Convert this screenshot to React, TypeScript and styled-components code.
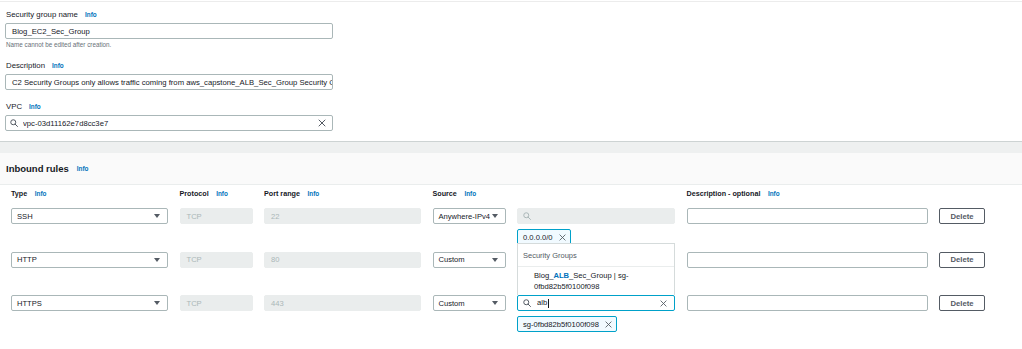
import React from 'react';
import styled, { createGlobalStyle } from 'styled-components';

const GlobalStyle = createGlobalStyle`
  html, body {
    margin: 0;
    padding: 0;
    background: #ffffff;
    overflow: hidden;
  }
  body {
    font-family: "Liberation Sans", Arial, sans-serif;
    color: #16191f;
  }
  * { box-sizing: border-box; }
`;

const COLUMNS = '157px 73px 157px 73px 158px 241px 46px';

const Page = styled.div`
  margin-top: 1px;
  border-top: 1px solid #ececec;
`;

const BasicSection = styled.section`
  display: flex;
  flex-direction: column;
  gap: 12px;
  padding: 8px 0 10px 5px;
`;

const Field = styled.div`
  display: flex;
  flex-direction: column;
`;

const Label = styled.div`
  display: flex;
  align-items: baseline;
  height: 9px;
  line-height: 9px;
  margin-bottom: 4px;
  padding-left: 1px;
  font-size: 7.8px;
`;

const Info = styled.span`
  margin-left: 7px;
  font-size: 6.4px;
  font-weight: 700;
  color: #0073bb;
`;

const TextBox = styled.div`
  display: flex;
  align-items: center;
  width: 328px;
  height: 16px;
  padding: 0 6px;
  border: 1px solid #aab7b8;
  border-radius: 2px;
  font-size: 7.7px;
  white-space: nowrap;
  overflow: hidden;
`;

const SearchBox = styled(TextBox)`
  padding: 0 6px 0 4px;
  gap: 5px;
`;

const Grow = styled.span`
  flex: 1;
  overflow: hidden;
`;

const Hint = styled.div`
  margin-top: 2px;
  height: 8px;
  line-height: 8px;
  padding-left: 1px;
  font-size: 6.3px;
  color: #687078;
`;

const Band = styled.div`
  height: 12px;
  border-top: 1px solid #cdd3d3;
  background: #eef0f0;
`;

const PanelHeader = styled.div`
  display: flex;
  align-items: center;
  height: 32px;
  padding-left: 6px;
  background: #fafafa;
  border-bottom: 1px solid #eaeded;
  font-size: 9.5px;
  font-weight: 700;
`;

const HeaderInfo = styled(Info)`
  margin-left: 8px;
`;

const RulesArea = styled.div`
  padding: 3px 0 0 11px;
`;

const ColumnHeads = styled.div`
  display: grid;
  grid-template-columns: ${COLUMNS};
  column-gap: 11.5px;
  height: 10px;
  margin-bottom: 10px;
`;

const ColumnHead = styled.div`
  display: flex;
  align-items: center;
  font-size: 7.2px;
  font-weight: 700;
  white-space: nowrap;
`;

const ColumnInfo = styled(Info)`
  margin-left: 7.5px;
`;

const RuleRow = styled.div`
  display: grid;
  grid-template-columns: ${COLUMNS};
  grid-template-rows: 16px auto;
  column-gap: 11.5px;
  row-gap: 5px;
  height: 43.5px;
  align-items: start;
`;

const Control = styled.div<{ $disabled?: boolean; $focused?: boolean }>`
  position: relative;
  display: flex;
  align-items: center;
  height: 16px;
  padding: 0 6px;
  border: 1px solid ${(p) => (p.$focused ? '#00a1c9' : p.$disabled ? '#eaeded' : '#aab7b8')};
  border-radius: 2px;
  background: ${(p) => (p.$disabled ? '#eaeded' : '#ffffff')};
  color: ${(p) => (p.$disabled ? '#aab7b8' : '#16191f')};
  font-size: 7.6px;
  white-space: nowrap;
`;

const SelectControl = styled(Control)`
  justify-content: space-between;
  padding: 0 7px 0 5px;
`;

const RuleSearch = styled(Control)`
  padding: 0 7px 0 5px;
  gap: 6px;
`;

const TokenCell = styled.div`
  grid-column: 5;
  grid-row: 2;
  display: flex;
`;

const Token = styled.div`
  display: flex;
  align-items: center;
  gap: 6px;
  height: 16px;
  padding: 0 4px 0 5px;
  border: 1px solid #00a1c9;
  border-radius: 2px;
  background: #f1faff;
  font-size: 7.6px;
`;

const TextCursor = styled.span`
  display: inline-block;
  width: 1px;
  height: 9px;
  margin-left: 1px;
  vertical-align: middle;
  background: #16191f;
`;

const Dropdown = styled.div`
  position: absolute;
  left: -1px;
  right: -1px;
  bottom: calc(100% + 1px);
  z-index: 2;
  background: #ffffff;
  border: 1px solid #d5dbdb;
  border-bottom: none;
  color: #16191f;
  white-space: normal;
`;

const GroupLabel = styled.div`
  display: flex;
  align-items: center;
  height: 23px;
  padding-left: 5px;
  border-bottom: 1px solid #eaeded;
  font-size: 7.5px;
  color: #545b64;
`;

const Option = styled.div`
  padding: 3px 8px 3px 16px;
  line-height: 11px;
  font-size: 7.6px;
`;

const Match = styled.b`
  color: #0073bb;
`;

const Button = styled.button`
  height: 16px;
  padding: 0;
  border: 1px solid #545b64;
  border-radius: 2px;
  background: #ffffff;
  color: #545b64;
  font-family: inherit;
  font-size: 7.7px;
  font-weight: 700;
`;

const Footer = styled.div`
  padding: 8.5px 0 0 5px;
`;

const AddButton = styled(Button)`
  width: 54px;
  border-color: #9aa0a4;
`;

const SearchIcon = ({ color = '#545b64' }: { color?: string }) => (
  <svg width="8" height="8" viewBox="0 0 16 16" fill="none" stroke={color} strokeWidth="2">
    <circle cx="6.5" cy="6.5" r="5" />
    <line x1="10.3" y1="10.3" x2="15" y2="15" strokeLinecap="round" />
  </svg>
);

const CloseIcon = ({ size = 8 }: { size?: number }) => (
  <svg width={size} height={size} viewBox="0 0 16 16" fill="none" stroke="#545b64" strokeWidth="2" strokeLinecap="round">
    <line x1="2" y1="2" x2="14" y2="14" />
    <line x1="14" y1="2" x2="2" y2="14" />
  </svg>
);

const Caret = () => (
  <svg width="6" height="4" viewBox="0 0 6 4">
    <polygon points="0,0 6,0 3,4" fill="#545b64" />
  </svg>
);

type Rule = {
  type: string;
  port: string;
  source: string;
  token?: string;
  focused?: boolean;
};

const rules: Rule[] = [
  { type: 'SSH', port: '22', source: 'Anywhere-IPv4', token: '0.0.0.0/0' },
  { type: 'HTTP', port: '80', source: 'Custom' },
  { type: 'HTTPS', port: '443', source: 'Custom', token: 'sg-0fbd82b5f0100f098', focused: true },
];

const heads = ['Type', 'Protocol', 'Port range', 'Source', '', 'Description - optional', ''];

const RuleLine = ({ rule }: { rule: Rule }) => (
  <RuleRow>
    <SelectControl>
      <span>{rule.type}</span>
      <Caret />
    </SelectControl>
    <Control $disabled>TCP</Control>
    <Control $disabled>{rule.port}</Control>
    <SelectControl>
      <span>{rule.source}</span>
      <Caret />
    </SelectControl>
    {rule.focused ? (
      <RuleSearch $focused>
        <SearchIcon />
        <Grow>
          alb<TextCursor />
        </Grow>
        <CloseIcon size={7} />
        <Dropdown>
          <GroupLabel>Security Groups</GroupLabel>
          <Option>
            Blog_<Match>ALB</Match>_Sec_Group | sg-
            <br />
            0fbd82b5f0100f098
          </Option>
        </Dropdown>
      </RuleSearch>
    ) : (
      <RuleSearch $disabled>
        <SearchIcon color="#aab7b8" />
      </RuleSearch>
    )}
    <Control />
    <Button>Delete</Button>
    {rule.token && (
      <TokenCell>
        <Token>
          <span>{rule.token}</span>
          <CloseIcon size={7} />
        </Token>
      </TokenCell>
    )}
  </RuleRow>
);

const App = () => (
  <Page>
    <GlobalStyle />
    <BasicSection>
      <Field>
        <Label>
          Security group name<Info>Info</Info>
        </Label>
        <TextBox>Blog_EC2_Sec_Group</TextBox>
        <Hint>Name cannot be edited after creation.</Hint>
      </Field>
      <Field>
        <Label>
          Description<Info>Info</Info>
        </Label>
        <TextBox>C2 Security Groups only allows traffic coming from aws_capstone_ALB_Sec_Group Security Group</TextBox>
      </Field>
      <Field>
        <Label>
          VPC<Info>Info</Info>
        </Label>
        <SearchBox>
          <SearchIcon />
          <Grow>vpc-03d11162e7d8cc3e7</Grow>
          <CloseIcon />
        </SearchBox>
      </Field>
    </BasicSection>
    <Band />
    <PanelHeader>
      Inbound rules<HeaderInfo>Info</HeaderInfo>
    </PanelHeader>
    <RulesArea>
      <ColumnHeads>
        {heads.map((h, i) => (
          <ColumnHead key={i}>
            {h && (
              <>
                {h}
                <ColumnInfo>Info</ColumnInfo>
              </>
            )}
          </ColumnHead>
        ))}
      </ColumnHeads>
      {rules.map((r) => (
        <RuleLine key={r.type} rule={r} />
      ))}
    </RulesArea>
    <Footer>
      <AddButton>Add rule</AddButton>
    </Footer>
  </Page>
);

export default App;
